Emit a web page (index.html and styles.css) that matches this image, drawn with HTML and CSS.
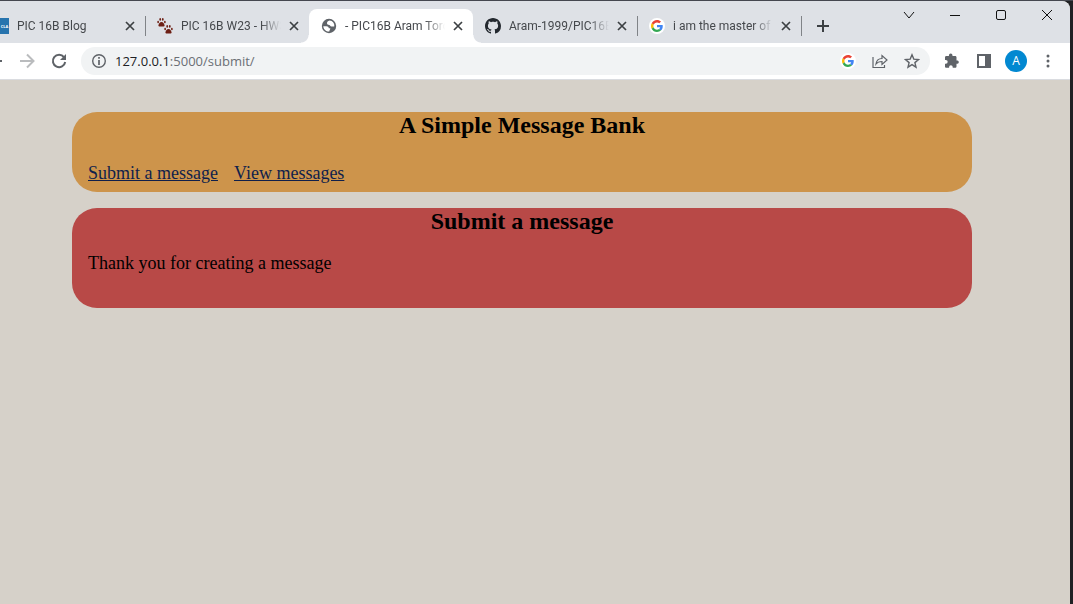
FILE: index.html
```html
<!DOCTYPE html>
<html lang="en">
<head>
    <meta charset="UTF-8">
    <title>- PIC16B Aram Toro</title>
    <link rel="stylesheet" href="styles.css">
</head>
<body>

    <!-- Shared icons -->
    <svg class="symbols" aria-hidden="true">
        <symbol id="google" viewBox="0 0 48 48">
            <path fill="#ea4335" d="M24 9.500c3.500 0 6.700 1.200 9.200 3.600l6.900-6.900C35.900 2.400 30.500 0 24 0 14.600 0 6.500 5.400 2.600 13.200l8 6.200C12.400 13.700 17.700 9.500 24 9.500z"/>
            <path fill="#4285f4" d="M47 24.500c0-1.600-.2-3.100-.4-4.500H24v9h12.900c-.6 3-2.300 5.500-4.800 7.200l7.700 6C44.400 38 47 31.800 47 24.500z"/>
            <path fill="#fbbc05" d="M10.500 28.600c-.5-1.500-.8-3-.8-4.600s.3-3.100.8-4.600l-8-6.200C.9 16.500 0 20.100 0 24s.9 7.500 2.600 10.800l7.900-6.200z"/>
            <path fill="#34a853" d="M24 48c6.500 0 11.900-2.100 15.900-5.800l-7.700-6c-2.200 1.500-4.900 2.300-8.200 2.300-6.300 0-11.600-4.200-13.500-9.900l-8 6.200C6.500 42.600 14.600 48 24 48z"/>
        </symbol>
        <symbol id="cross" viewBox="0 0 10 10">
            <path d="M1 1l8 8M9 1L1 9" fill="none" stroke="#3c4043" stroke-width="1.700"/>
        </symbol>
        <symbol id="paw" viewBox="0 0 16 16">
            <ellipse cx="2" cy="7" rx="1.500" ry="2.200"/>
            <ellipse cx="5.700" cy="2.500" rx="1.500" ry="2.300"/>
            <ellipse cx="10.300" cy="2.500" rx="1.500" ry="2.300"/>
            <ellipse cx="14" cy="7" rx="1.500" ry="2.200"/>
            <path d="M8 7c3 0 5.500 4 5.500 6.500S10 15 8 15s-5.500 1-5.500-1.500S5 7 8 7z"/>
        </symbol>
    </svg>

    <div class="browser">
        <header class="titlebar">
            <div class="tabs">
                <div class="tab first">
                    <span class="favicon ucla">CLA</span>
                    <span class="tab-title">PIC 16B Blog</span>
                    <button class="close" aria-label="Close tab"><svg><use href="#cross"/></svg></button>
                </div>
                <div class="tab">
                    <svg class="favicon" viewBox="0 0 16 16" fill="#6d1f14">
                        <use href="#paw" x="0" y="0" width="9" height="9"/>
                        <use href="#paw" x="7" y="7" width="9" height="9"/>
                    </svg>
                    <span class="tab-title">PIC 16B W23 - HW3</span>
                    <button class="close" aria-label="Close tab"><svg><use href="#cross"/></svg></button>
                </div>
                <div class="tab active">
                    <svg class="favicon" viewBox="0 0 16 16">
                        <circle cx="8" cy="8" r="7.200" fill="#5f6368"/>
                        <path d="M8.500 2.600C6.800 3 6 4.200 6 5.300c0 1.300 1 1.700 2.200 1.700 1 0 1 1.500 2.200 1.500h2.800c.8-2.600-1.600-5.900-4.700-5.900zM2.300 8.200h3.200c1.300 0 2.300.9 2.300 2h1.500c0 1.500-1 1.800-1 3.300-3 .2-5.900-2.300-6-5.300z" fill="#fff"/>
                    </svg>
                    <span class="tab-title">- PIC16B Aram Toro</span>
                    <button class="close" aria-label="Close tab"><svg><use href="#cross"/></svg></button>
                </div>
                <div class="tab">
                    <svg class="favicon" viewBox="0 0 16 16" fill="#24292f">
                        <path d="M8 0C3.580 0 0 3.580 0 8c0 3.540 2.290 6.530 5.470 7.590.4.070.55-.17.55-.38 0-.19-.01-.82-.01-1.490-2.010.37-2.530-.49-2.690-.94-.09-.23-.48-.94-.82-1.130-.28-.15-.68-.52-.01-.53.63-.01 1.080.58 1.230.82.72 1.210 1.870.87 2.330.66.07-.52.28-.87.510-1.070-1.780-.2-3.640-.89-3.640-3.950 0-.87.310-1.590.82-2.150-.08-.2-.36-1.020.08-2.120 0 0 .67-.21 2.200.82.640-.18 1.320-.27 2-.27s1.360.09 2 .27c1.530-1.040 2.200-.82 2.200-.82.44 1.100.16 1.920.08 2.120.51.560.82 1.270.82 2.150 0 3.070-1.870 3.750-3.650 3.950.29.25.54.73.54 1.480 0 1.070-.01 1.930-.01 2.200 0 .21.15.46.55.38A8.010 8.010 0 0 0 16 8c0-4.420-3.580-8-8-8z"/>
                    </svg>
                    <span class="tab-title">Aram-1999/PIC16B</span>
                    <button class="close" aria-label="Close tab"><svg><use href="#cross"/></svg></button>
                </div>
                <div class="tab">
                    <svg class="favicon" viewBox="0 0 16 16"><circle cx="8" cy="8" r="8" fill="#fff"/><use href="#google" x="2" y="2" width="12" height="12"/></svg>
                    <span class="tab-title">i am the master of</span>
                    <button class="close" aria-label="Close tab"><svg><use href="#cross"/></svg></button>
                </div>
            </div>
            <button class="new-tab" aria-label="New tab">
                <svg viewBox="0 0 12 12"><path d="M6 0v12M0 6h12" stroke="#3c4043" stroke-width="2"/></svg>
            </button>
            <div class="window-buttons">
                <button aria-label="Search tabs"><svg viewBox="0 0 12 12"><path d="M1 3l5 6 5-6"/></svg></button>
                <button aria-label="Minimize"><svg viewBox="0 0 12 12"><path d="M1 6.500h10"/></svg></button>
                <button aria-label="Maximize"><svg viewBox="0 0 12 12"><rect x="1.500" y="1.500" width="9" height="9" rx="1.500"/></svg></button>
                <button aria-label="Close"><svg viewBox="0 0 12 12"><path d="M1 1l10 10M11 1L1 11"/></svg></button>
            </div>
        </header>

        <nav class="toolbar">
            <button class="back" aria-label="Back"><svg viewBox="0 0 16 16"><path d="M0 8h16" stroke="#5f6368" stroke-width="2"/></svg></button>
            <button class="forward" aria-label="Forward"><svg viewBox="0 0 16 16" fill="none" stroke="#babcbe" stroke-width="2"><path d="M1 8h13M8 1.500L14.500 8 8 14.500"/></svg></button>
            <button class="reload" aria-label="Reload"><svg viewBox="0 0 16 16"><path d="M13 4.200A6.200 6.200 0 1 0 14.200 9" fill="none" stroke="#5f6368" stroke-width="2"/><path d="M15 1v6H9z" fill="#5f6368"/></svg></button>
            <div class="address">
                <svg class="icon" viewBox="0 0 16 16"><circle cx="8" cy="8" r="6.300" fill="none" stroke="#5f6368" stroke-width="1.400"/><path d="M8 7v5M8 4v1.800" stroke="#5f6368" stroke-width="1.700"/></svg>
                <a class="url" href="#"><span class="host">127.0.0.1</span>:5000/submit/</a>
                <button aria-label="Search with Google"><svg viewBox="0 0 16 16"><circle cx="8" cy="8" r="8" fill="#fff"/><use href="#google" x="2" y="2" width="12" height="12"/></svg></button>
                <button aria-label="Share"><svg viewBox="0 0 16 16" fill="none" stroke="#5f6368" stroke-width="1.200"><path d="M1 4v10.500h11.500v-2.500M4 11c.5-4 2.500-5.500 6-5.500V2.500L15 7l-5 4.500V8.500c-3 0-4.500.5-6 2.500z"/></svg></button>
                <button aria-label="Bookmark"><svg viewBox="0 0 16 16" fill="none" stroke="#5f6368" stroke-width="1.400"><path d="M8 1.800l1.800 4.300 4.700.4-3.600 3.100 1.100 4.600L8 11.700l-4 2.500 1.100-4.600-3.600-3.100 4.700-.4z"/></svg></button>
            </div>
            <div class="tools">
                <button aria-label="Extensions"><svg viewBox="0 0 16 16" fill="#5f6368"><path d="M13.500 7.500h-1V4.300c0-.7-.6-1.300-1.300-1.300H8.500V2.400a1.800 1.800 0 0 0-3.600 0V3H2.300C1.600 3 1 3.600 1 4.300v2.600h.8a1.900 1.900 0 0 1 0 3.800H1v2.800c0 .7.600 1.300 1.300 1.300h2.800V14a1.800 1.800 0 0 1 3.600 0v.8h2.500c.7 0 1.300-.6 1.300-1.300v-2.700h1a1.700 1.700 0 0 0 0-3.300z"/></svg></button>
                <button aria-label="Side panel"><svg viewBox="0 0 16 16"><path d="M1 1h14v14H1z" fill="#5f6368"/><path d="M3 3h6v10H3z" fill="#fff"/></svg></button>
                <button aria-label="Profile"><span class="avatar">A</span></button>
                <button aria-label="Menu"><svg viewBox="0 0 16 16" fill="#5f6368"><circle cx="8" cy="3" r="1.500"/><circle cx="8" cy="8" r="1.500"/><circle cx="8" cy="13" r="1.500"/></svg></button>
            </div>
        </nav>

        <main class="page">
            <section class="panel bank">
                <h1>A Simple Message Bank</h1>
                <div class="links">
                    <a href="#">Submit a message</a>
                    <a href="#">View messages</a>
                </div>
            </section>
            <section class="panel submit">
                <h1>Submit a message</h1>
                <p>Thank you for creating a message</p>
            </section>
        </main>
    </div>

</body>
</html>
```

FILE: styles.css
```css
/* Desktop behind the window */
body {
    margin: 0;
    padding: 1px 3px 0 0;
    min-height: 100vh;
    box-sizing: border-box;
    display: flex;
    background: linear-gradient(#45474f 1px, #202124 1px);
    font-family: "Open Sans", sans-serif;
}

.symbols {
    display: none;
}

button {
    display: flex;
    align-items: center;
    justify-content: center;
    margin: 0;
    padding: 0;
    border: none;
    background: none;
    font-family: inherit;
}

svg {
    display: block;
    width: 16px;
    height: 16px;
    flex-shrink: 0;
}

.browser {
    flex: 1;
    min-width: 0;
    display: flex;
    flex-direction: column;
    background: #d6d1c9;
    border-top-right-radius: 8px;
    overflow: hidden;
}

/* Tabs */
.titlebar {
    display: flex;
    height: 42px;
    background: #dee1e6;
}

.tabs {
    display: flex;
    padding-top: 8px;
}

.tab {
    display: flex;
    align-items: center;
    gap: 8px;
    box-sizing: border-box;
    width: 164px;
    padding: 0 10px 0 12px;
    position: relative;
}

.tab.first {
    width: 145px;
    padding-left: 0;
}

.tab::after {
    content: "";
    position: absolute;
    right: -1px;
    top: 7px;
    width: 1px;
    height: 20px;
    background: #808387;
}

.tab:has(+ .active)::after {
    display: none;
}

.tab.active {
    background: #fff;
    border-radius: 8px 8px 0 0;
}

/* Curved feet of the active tab */
.tab.active::before,
.tab.active::after {
    content: "";
    position: absolute;
    top: auto;
    bottom: 0;
    width: 8px;
    height: 8px;
}

.tab.active::before {
    left: -8px;
    background: radial-gradient(circle at 0 0, transparent 7px, #fff 8px);
}

.tab.active::after {
    right: -8px;
    background: radial-gradient(circle at 100% 0, transparent 7px, #fff 8px);
}

.favicon {
    width: 16px;
    height: 16px;
    flex-shrink: 0;
}

.ucla {
    width: 9px;
    display: flex;
    justify-content: center;
    align-items: center;
    background: #2774ae;
    color: #fff;
    font-size: 4px;
    font-weight: bold;
}

.tab-title {
    flex: 1;
    overflow: hidden;
    white-space: nowrap;
    font-family: Roboto, sans-serif;
    font-size: 12px;
    color: #45484c;
    mask-image: linear-gradient(to left, transparent, #000 20px);
}

.close svg {
    width: 10px;
    height: 10px;
}

.new-tab {
    width: 44px;
    padding-top: 8px;
}

.new-tab svg {
    width: 12px;
    height: 12px;
}

.window-buttons {
    display: flex;
    margin-left: auto;
    height: 28px;
}

.window-buttons button {
    width: 46px;
}

.window-buttons svg {
    width: 12px;
    height: 12px;
    fill: none;
    stroke: #111;
}

/* Address bar */
.toolbar {
    display: flex;
    align-items: center;
    height: 36px;
    background: #fff;
    border-bottom: 1px solid #dadce0;
}

.back {
    width: 2px;
    overflow: hidden;
}

.forward {
    margin-left: 17px;
}

.reload {
    margin: 0 14px 0 16px;
}

.address {
    flex: 1;
    display: flex;
    align-items: center;
    gap: 16px;
    height: 28px;
    padding: 0 10px;
    border-radius: 14px;
    background: #f1f3f4;
}

.url {
    flex: 1;
    margin-left: -8px;
    font-size: 13px;
    color: #6b6f74;
    text-decoration: none;
}

.host {
    color: #202124;
}

.tools {
    display: flex;
    align-items: center;
    padding: 0 6px;
}

.tools button {
    width: 32px;
}

.avatar {
    width: 22px;
    border-radius: 50%;
    background: #0288d1;
    color: #fff;
    font-size: 12px;
    line-height: 22px;
}

/* Message bank page */
.page {
    flex: 1;
    display: flex;
    flex-direction: column;
    gap: 16px;
    padding: 32px 98px 32px 72px;
    font-family: "Liberation Serif", serif;
    font-size: 18px;
}

.panel {
    box-sizing: border-box;
    border-radius: 25px;
    padding: 0 16px;
}

.bank {
    min-height: 80px;
    background: #cd944b;
}

.submit {
    min-height: 100px;
    background: #b84947;
}

h1 {
    margin: 0;
    text-align: center;
    font-size: 24px;
    line-height: 27px;
    color: #000;
}

.links {
    display: flex;
    gap: 16px;
    padding-top: 24px;
}

.links a {
    color: #0f1f4b;
}

.panel p {
    margin: 18px 0 0;
}
```
